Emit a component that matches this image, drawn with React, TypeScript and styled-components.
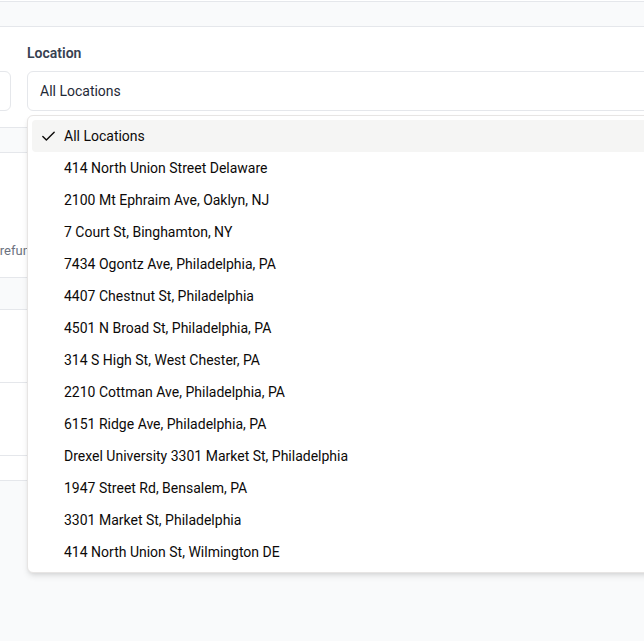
import React from "react";
import styled, { createGlobalStyle } from "styled-components";
import { Check } from "lucide-react";

const GlobalStyle = createGlobalStyle`
  html, body { margin: 0; padding: 0; }
  body {
    background: #f9fafb;
    font-family: Roboto, "Liberation Sans", sans-serif;
    color: #0c0a09;
  }
`;

const locations = [
  "All Locations",
  "414 North Union Street Delaware",
  "2100 Mt Ephraim Ave, Oaklyn, NJ",
  "7 Court St, Binghamton, NY",
  "7434 Ogontz Ave, Philadelphia, PA",
  "4407 Chestnut St, Philadelphia",
  "4501 N Broad St, Philadelphia, PA",
  "314 S High St, West Chester, PA",
  "2210 Cottman Ave, Philadelphia, PA",
  "6151 Ridge Ave, Philadelphia, PA",
  "Drexel University 3301 Market St, Philadelphia",
  "1947 Street Rd, Bensalem, PA",
  "3301 Market St, Philadelphia",
  "414 North Union St, Wilmington DE",
];

const Viewport = styled.div`
  width: 100vw;
  height: 100vh;
  overflow: hidden;
`;

const Page = styled.div`
  width: 1300px;
  margin-left: -253px;
  display: flex;
  flex-direction: column;
`;

const HeaderEdge = styled.div`
  height: 1px;
  background: #ffffff;
  border-bottom: 1px solid #e5e7eb;
`;

const FilterCard = styled.section`
  margin-top: 24px;
  background: #ffffff;
  border-top: 1px solid #e5e7eb;
  border-bottom: 1px solid #e5e7eb;
  padding: 16px 24px;
  display: flex;
  gap: 16px;
`;

const Field = styled.div<{ $width: number }>`
  width: ${(p) => p.$width}px;
  display: flex;
  flex-direction: column;
  gap: 8px;
  position: relative;
`;

const Label = styled.label`
  font-size: 14px;
  line-height: 20px;
  font-weight: 600;
  color: #374151;
  height: 20px;
`;

const SelectBox = styled.div`
  box-sizing: border-box;
  height: 40px;
  border: 1px solid #e5e7eb;
  border-radius: 6px;
  background: #ffffff;
  padding: 0 12px;
  display: flex;
  align-items: center;
  font-size: 14px;
  color: #1f2937;
`;

const Menu = styled.div`
  position: absolute;
  top: 72px;
  left: 0;
  width: 760px;
  box-sizing: border-box;
  background: #ffffff;
  border: 1px solid #e7e5e4;
  border-radius: 6px;
  padding: 4px;
  box-shadow: 0 4px 6px -1px rgba(0, 0, 0, 0.1), 0 2px 4px -2px rgba(0, 0, 0, 0.1);
  z-index: 10;
`;

const Item = styled.div<{ $active?: boolean }>`
  position: relative;
  height: 32px;
  display: flex;
  align-items: center;
  padding-left: 32px;
  border-radius: 4px;
  font-size: 14px;
  color: #0c0a09;
  background: ${(p) => (p.$active ? "#f5f5f4" : "transparent")};
`;

const CheckMark = styled.span`
  position: absolute;
  left: 7px;
  top: 0;
  bottom: 0;
  width: 18px;
  display: flex;
  align-items: center;
  justify-content: center;
`;

const TableCard = styled.section`
  margin-top: 24px;
  background: #ffffff;
  border-top: 1px solid #e5e7eb;
  border-bottom: 1px solid #e5e7eb;
`;

const Stats = styled.div`
  height: 125px;
  box-sizing: border-box;
  padding: 0 24px 17px;
  display: grid;
  grid-template-columns: 125px 240px;
  column-gap: 16px;
  align-items: end;
  border-bottom: 1px solid #e5e7eb;
`;

const Caption = styled.div`
  font-size: 13px;
  line-height: 18px;
  color: #6b7280;
  white-space: nowrap;
`;

const HeadRow = styled.div`
  height: 31px;
  background: #f9fafb;
  border-bottom: 1px solid #e5e7eb;
`;

const Row = styled.div<{ $h: number }>`
  height: ${(p) => p.$h}px;
  border-bottom: 1px solid #e5e7eb;
  &:last-child { border-bottom: none; }
`;

export default function App() {
  return (
    <>
      <GlobalStyle />
      <Viewport>
        <Page>
          <HeaderEdge />
          <FilterCard>
            <Field $width={240}>
              <Label>Date Range</Label>
              <SelectBox>Last 30 days</SelectBox>
            </Field>
            <Field $width={760}>
              <Label>Location</Label>
              <SelectBox>All Locations</SelectBox>
              <Menu role="listbox">
                {locations.map((loc, i) => (
                  <Item key={loc} $active={i === 0}>
                    {i === 0 && (
                      <CheckMark>
                        <Check size={17} strokeWidth={2} color="#0c0a09" />
                      </CheckMark>
                    )}
                    {loc}
                  </Item>
                ))}
              </Menu>
            </Field>
          </FilterCard>
          <TableCard>
            <Stats>
              <Caption>Orders this period</Caption>
              <Caption>Net sales after refunds</Caption>
            </Stats>
            <HeadRow />
            <Row $h={72} />
            <Row $h={72} />
            <Row $h={24} />
          </TableCard>
        </Page>
      </Viewport>
    </>
  );
}
